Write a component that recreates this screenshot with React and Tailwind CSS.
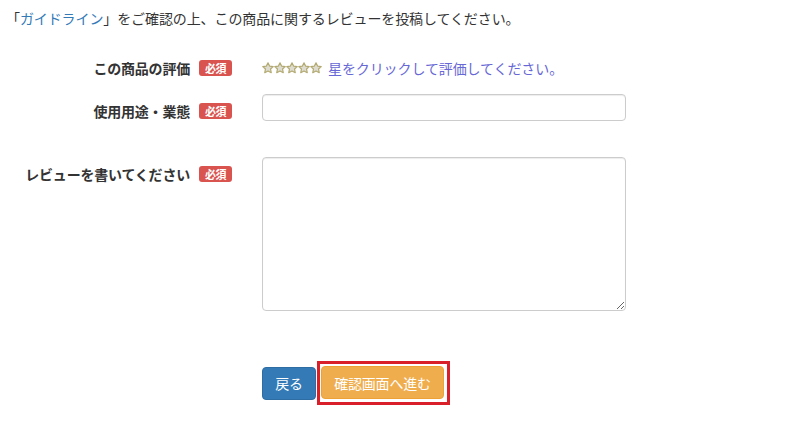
import React from "react";

const font = { fontFamily: '"Noto Sans CJK JP", "Noto Sans", sans-serif' };

function Badge() {
  return (
    <span className="inline-flex items-center justify-center w-[33px] h-[16px] rounded-[3px] bg-[#d9534f] text-white text-[11px] font-bold leading-none tracking-[-0.5px]">
      必須
    </span>
  );
}

function Star() {
  return (
    <svg width="12" height="12" viewBox="0 0 24 24">
      <path
        d="M12 1.5l3.2 6.7 7.3.9-5.4 5 1.4 7.3L12 17.8l-6.5 3.6 1.4-7.3-5.4-5 7.3-.9z"
        fill="#dedcd0"
        stroke="#b3aa72"
        strokeWidth="2.4"
        strokeLinejoin="round"
      />
    </svg>
  );
}

function Label({ children }) {
  return (
    <div className="w-[232px] shrink-0 flex justify-end items-center gap-[9px] h-[16px]">
      <span className="text-[14px] font-bold text-[#333] leading-[16px] tracking-[-0.2px] whitespace-nowrap">
        {children}
      </span>
      <Badge />
    </div>
  );
}

export default function App() {
  return (
    <div className="w-[800px] h-[421px] bg-white overflow-hidden text-[#333]" style={font}>
      <div className="pl-[6px] pt-[8px] h-[28px] text-[14px] leading-[20px] tracking-[-0.1px] whitespace-nowrap">
        「<span className="text-[#337ab7]">ガイドライン</span>」をご確認の上、この商品に関するレビューを投稿してください。
      </div>

      <div className="flex items-center mt-[32px] h-[16px]">
        <Label>この商品の評価</Label>
        <div className="ml-[30px] flex items-center">
          <div className="flex">
            <Star />
            <Star />
            <Star />
            <Star />
            <Star />
          </div>
          <span className="ml-[6px] text-[14px] leading-[16px] text-[#6767d6] tracking-[-0.1px] whitespace-nowrap">
            星をクリックして評価してください。
          </span>
        </div>
      </div>

      <div className="flex items-start mt-[18px]">
        <div className="pt-[9px]">
          <Label>使用用途・業態</Label>
        </div>
        <input
          type="text"
          className="ml-[30px] w-[364px] h-[27px] border border-[#ccc] rounded-[4px] shadow-[inset_0_1px_1px_rgba(0,0,0,0.075)] outline-none px-[8px] text-[14px]"
        />
      </div>

      <div className="flex items-start mt-[36px]">
        <div className="pt-[9px]">
          <Label>レビューを書いてください</Label>
        </div>
        <textarea className="ml-[30px] w-[364px] h-[154px] border border-[#ccc] rounded-[4px] shadow-[inset_0_1px_1px_rgba(0,0,0,0.075)] outline-none px-[8px] py-[6px] text-[14px] resize-y block" />
      </div>

      <div className="flex items-center mt-[50px] pl-[262px]">
        <button className="w-[54px] h-[33px] rounded-[4px] bg-[#337ab7] border border-[#2e6da4] text-white text-[14px] leading-none tracking-[-0.2px]">
          戻る
        </button>
        <div className="ml-[1px] border-[3px] border-[#d81f2a] pl-[1px] pr-[3px] pt-[2px] pb-[3px]">
          <button className="w-[123px] h-[33px] rounded-[4px] bg-[#f0ad4e] border border-[#eea236] text-white text-[14px] leading-none tracking-[-0.2px] block">
            確認画面へ進む
          </button>
        </div>
      </div>
    </div>
  );
}
